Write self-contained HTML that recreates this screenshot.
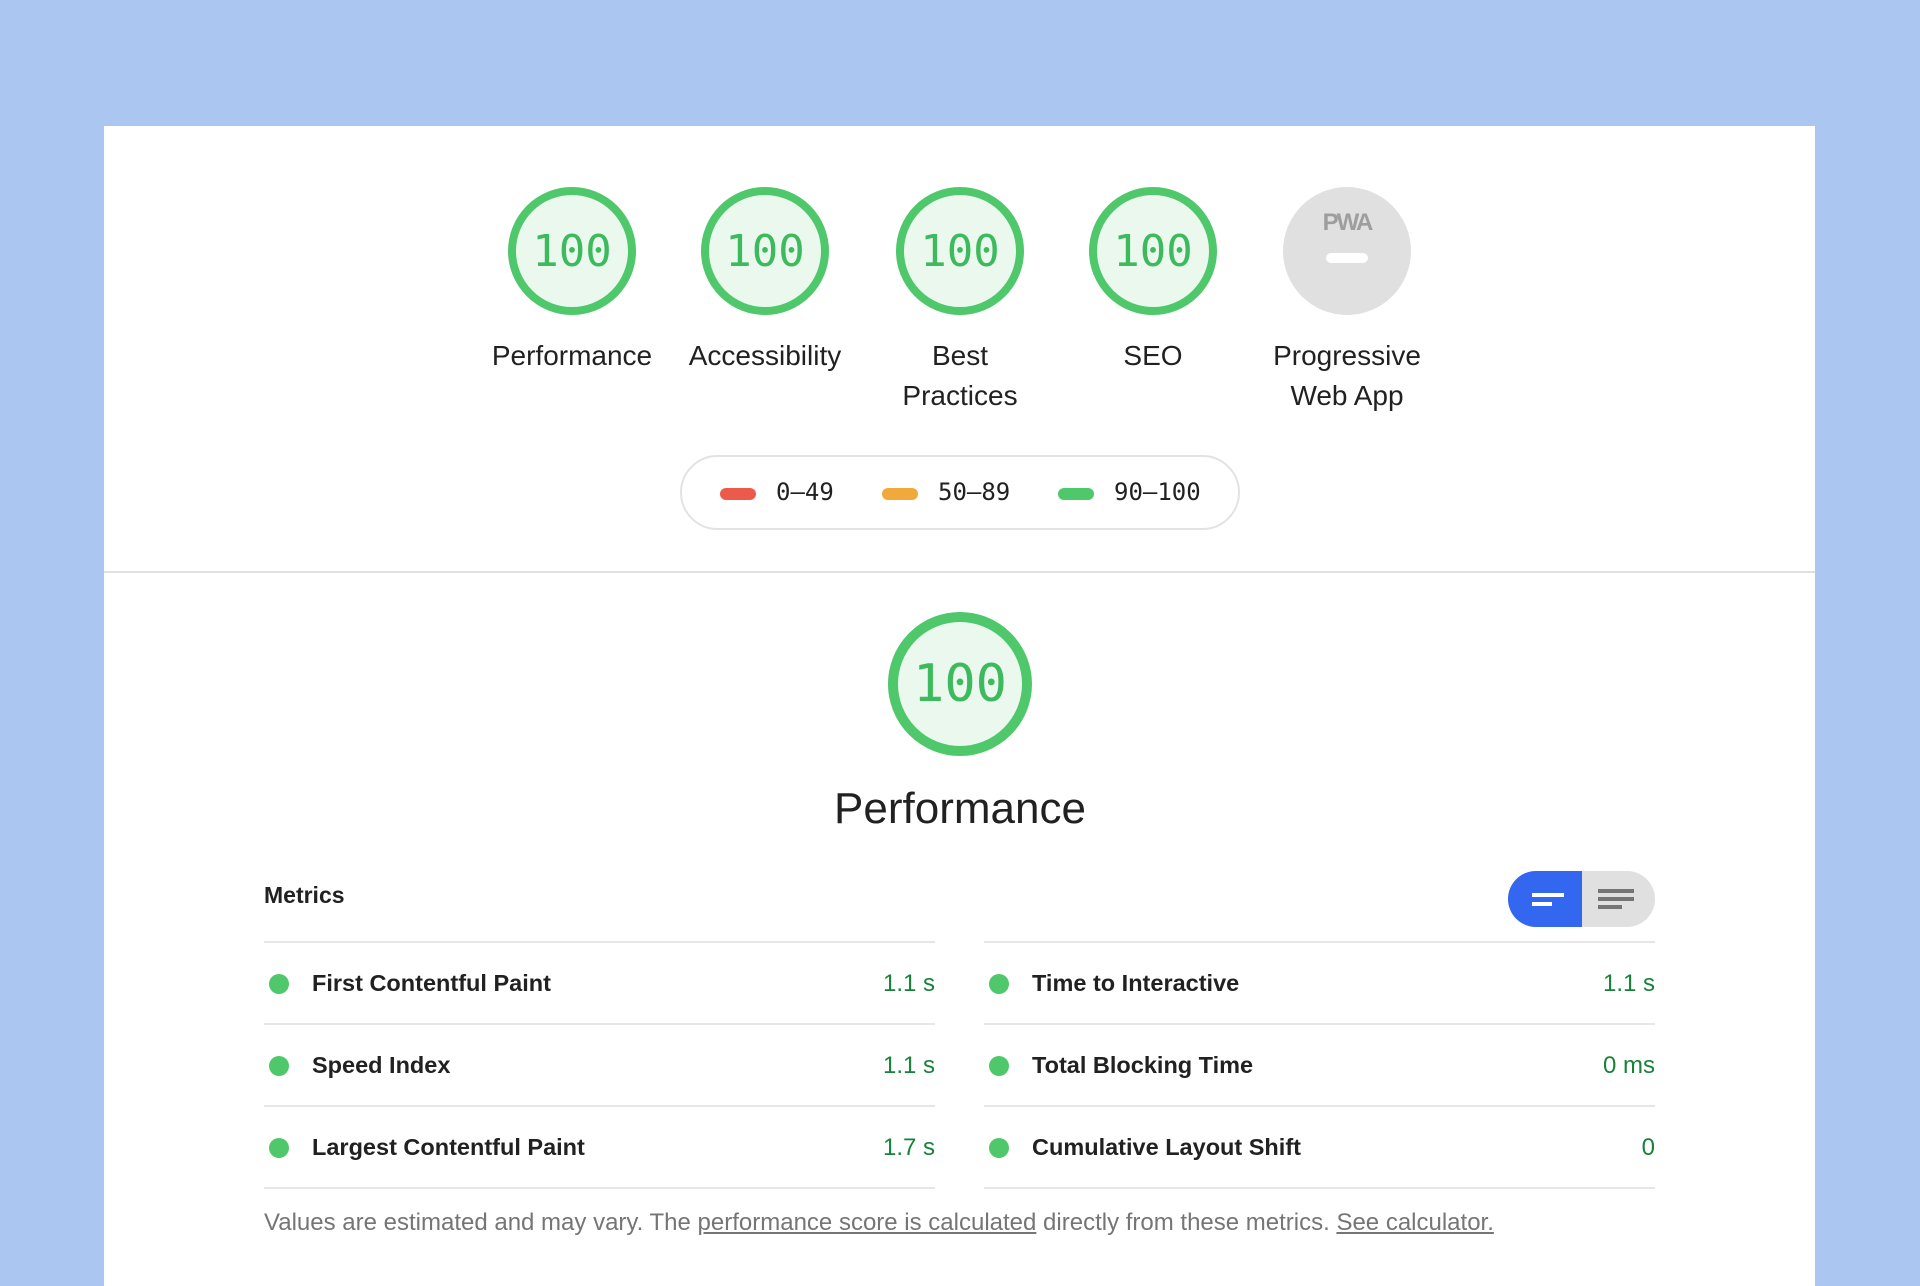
<!DOCTYPE html>
<html><head><meta charset="utf-8"><style>
*{margin:0;padding:0;box-sizing:border-box}
body{width:1920px;height:1280px;background:#abc6f0;font-family:"Liberation Sans",sans-serif;color:#212121;position:relative;overflow:hidden}
.card{position:absolute;left:104px;top:126px;width:1711px;height:1160px;background:#fff}
.g{position:absolute;width:128px;height:128px;border-radius:50%;border:8px solid #4fc86b;background:#ebf8ee;color:#3dba5d;font-family:"DejaVu Sans Mono",monospace;font-size:44px;display:flex;align-items:center;justify-content:center}
.lbl{position:absolute;width:200px;text-align:center;font-size:28px;line-height:40px;color:#212121}
.abs{position:absolute}
.row{position:absolute;height:82px;border-bottom:2px solid #e6e6e6;font-size:23.5px;font-weight:bold;color:#212121}
.row .d{position:absolute;left:5px;top:31px;width:20px;height:20px;border-radius:50%;background:#4fc86b}
.row .t{position:absolute;left:48px;top:27px}
.row .v{position:absolute;right:0;top:27px;color:#178239;font-weight:normal;font-size:24px}
</style></head><body>
<div class="card"></div>
<div class="g" style="left:508px;top:187px">100</div>
<div class="g" style="left:701px;top:187px">100</div>
<div class="g" style="left:896px;top:187px">100</div>
<div class="g" style="left:1089px;top:187px">100</div>
<div class="abs" style="left:1283px;top:187px;width:128px;height:128px;border-radius:50%;background:#e0e0e0">
<div class="abs" style="left:0;width:128px;top:22px;text-align:center;font-weight:bold;font-size:24px;color:#9e9e9e;letter-spacing:-2px">PWA</div>
<div class="abs" style="left:43px;top:66px;width:42px;height:10px;border-radius:5px;background:#fff"></div></div>
<div class="lbl" style="left:472px;top:336px">Performance</div>
<div class="lbl" style="left:665px;top:336px">Accessibility</div>
<div class="lbl" style="left:860px;top:336px">Best<br>Practices</div>
<div class="lbl" style="left:1053px;top:336px">SEO</div>
<div class="lbl" style="left:1247px;top:336px">Progressive<br>Web App</div>
<div class="abs" style="left:680px;top:455px;width:560px;height:75px;border:2px solid #e3e3e3;border-radius:38px;font-family:'DejaVu Sans Mono',monospace;font-size:24px;color:#212121">
<div class="abs" style="left:38px;top:31px;width:36px;height:12px;border-radius:6px;background:#eb5a4b"></div><div class="abs" style="left:94px;top:21px">0–49</div>
<div class="abs" style="left:200px;top:31px;width:36px;height:12px;border-radius:6px;background:#f2a93b"></div><div class="abs" style="left:256px;top:21px">50–89</div>
<div class="abs" style="left:376px;top:31px;width:36px;height:12px;border-radius:6px;background:#4fc86b"></div><div class="abs" style="left:432px;top:21px">90–100</div>
</div>
<div class="abs" style="left:104px;top:571px;width:1711px;height:2px;background:#e0e0e0"></div>
<div class="g" style="left:888px;top:612px;width:144px;height:144px;border-width:10px;font-size:52px">100</div>
<div class="abs" style="left:660px;top:784px;width:600px;text-align:center;font-size:44px">Performance</div>
<div class="abs" style="left:264px;top:882px;font-size:23px;font-weight:bold">Metrics</div>
<div class="abs" style="left:1508px;top:871px;width:147px;height:56px;border-radius:28px;background:#e0e0e0;overflow:hidden">
<div class="abs" style="left:0;top:0;width:74px;height:56px;background:#3367f0"></div>
<div class="abs" style="left:24px;top:22px;width:32px;height:4px;background:#fff"></div>
<div class="abs" style="left:24px;top:31px;width:20px;height:4px;background:#fff"></div>
<div class="abs" style="left:90px;top:18px;width:36px;height:4px;background:#757575"></div>
<div class="abs" style="left:90px;top:26px;width:36px;height:4px;background:#757575"></div>
<div class="abs" style="left:90px;top:34px;width:24px;height:4px;background:#757575"></div>
</div>
<div class="abs" style="left:264px;top:941px;width:671px;height:2px;background:#e6e6e6"></div>
<div class="abs" style="left:984px;top:941px;width:671px;height:2px;background:#e6e6e6"></div>
<div class="row" style="left:264px;top:943px;width:671px"><div class="d"></div><div class="t">First Contentful Paint</div><div class="v">1.1 s</div></div>
<div class="row" style="left:264px;top:1025px;width:671px"><div class="d"></div><div class="t">Speed Index</div><div class="v">1.1 s</div></div>
<div class="row" style="left:264px;top:1107px;width:671px"><div class="d"></div><div class="t">Largest Contentful Paint</div><div class="v">1.7 s</div></div>
<div class="row" style="left:984px;top:943px;width:671px"><div class="d"></div><div class="t">Time to Interactive</div><div class="v">1.1 s</div></div>
<div class="row" style="left:984px;top:1025px;width:671px"><div class="d"></div><div class="t">Total Blocking Time</div><div class="v">0 ms</div></div>
<div class="row" style="left:984px;top:1107px;width:671px"><div class="d"></div><div class="t">Cumulative Layout Shift</div><div class="v">0</div></div>
<div class="abs" style="left:264px;top:1209px;font-size:24px;color:#757575;white-space:nowrap">Values are estimated and may vary. The <u>performance score is calculated</u> directly from these metrics. <u>See calculator.</u></div>
</body></html>
